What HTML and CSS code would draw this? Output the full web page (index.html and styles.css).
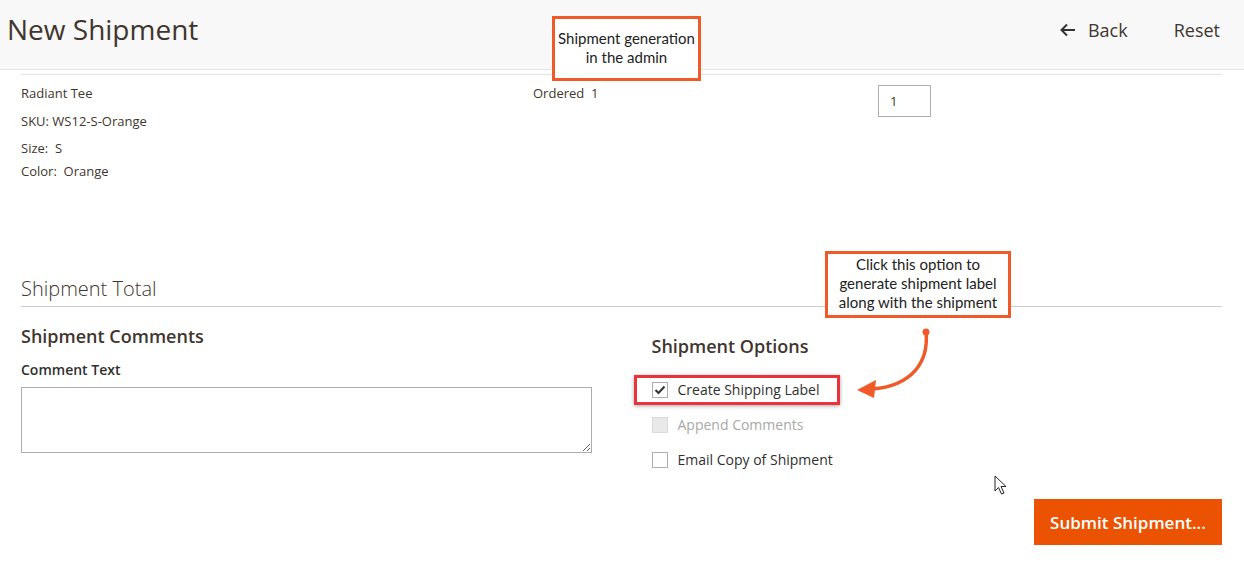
FILE: index.html
```html
<!DOCTYPE html>
<html lang="en">
<head>
  <meta charset="UTF-8" />
  <title>New Shipment</title>
  <link rel="stylesheet" href="styles.css">
</head>
<body>

  <div class="page-header">
    <h1 class="page-title">New Shipment</h1>
    <div class="page-actions">
      <span class="action-back">
        <svg class="back-icon" width="16" height="14" viewBox="0 0 16 14">
          <path d="M15 7H2M7 1.5L1.5 7L7 12.5" fill="none" stroke="#333" stroke-width="2"/>
        </svg>
        Back
      </span>
      <span class="action-reset">Reset</span>
    </div>
  </div>

  <div class="content">
    <div class="items">
      <div class="item-product">
        <div class="product-name">Radiant Tee</div>
        <div class="product-sku">SKU: WS12-S-Orange</div>
        <div class="product-opt size">Size:&nbsp; S</div>
        <div class="product-opt color">Color:&nbsp; Orange</div>
      </div>
      <div class="item-ordered">Ordered&nbsp; 1</div>
      <div class="item-qty">
        <div class="qty-input">1</div>
      </div>
    </div>

    <h2 class="total-title">Shipment Total</h2>

    <div class="columns">
      <div class="col-comments">
        <h3 class="section-title">Shipment Comments</h3>
        <div class="field-label">Comment Text</div>
        <textarea class="comment-box"></textarea>
      </div>
      <div class="col-options">
        <h3 class="section-title options-title">Shipment Options</h3>
        <div class="option option-first">
          <span class="check checked">
            <svg width="12" height="10" viewBox="0 0 12 10"><path d="M1.5 5L4.5 8L10.5 1.5" fill="none" stroke="#333" stroke-width="2"/></svg>
          </span>
          <span>Create Shipping Label</span>
          <span class="highlight"></span>
        </div>
        <div class="option disabled">
          <span class="check"></span>
          <span>Append Comments</span>
        </div>
        <div class="option">
          <span class="check"></span>
          <span>Email Copy of Shipment</span>
        </div>
      </div>
    </div>

    <div class="actions">
      <button class="submit-btn">Submit Shipment...</button>
    </div>
  </div>

  <!-- annotations drawn over the screen -->
  <div class="callout callout-top">Shipment generation<br>in the admin</div>
  <div class="callout callout-options">Click this option to<br>generate shipment label<br>along with the shipment</div>

  <svg class="arrow" width="90" height="80" viewBox="850 325 90 80">
    <circle cx="926" cy="332" r="3.5" fill="#f05a28"/>
    <path d="M926 332 C929 362 912 386 872 389" fill="none" stroke="#f05a28" stroke-width="3.5" stroke-linecap="round"/>
    <path d="M857 390 L876 380 L874 398 Z" fill="#f05a28"/>
  </svg>

  <svg class="cursor" width="14" height="22" viewBox="0 0 14 22">
    <path d="M1 1 L1 16 L4.5 12.5 L7.5 19 L10 18 L7 11.5 L12 11.5 Z" fill="#fff" stroke="#222" stroke-width="1"/>
  </svg>

</body>
</html>
```

FILE: styles.css
```css
body {
  margin: 0;
  font-family: 'Open Sans', 'Liberation Sans', sans-serif;
  color: #303030;
  background: #fff;
  position: relative;
  width: 1244px;
  height: 568px;
  overflow: hidden;
}

h1, h2, h3 {
  margin: 0;
  font-weight: normal;
}

.page-header {
  height: 69px;
  background: #f8f8f8;
  border-bottom: 1px solid #e3e3e3;
  display: flex;
  align-items: center;
  justify-content: space-between;
  padding: 0 24px 0 7px;
}

.page-title {
  font-size: 28px;
  color: #41362f;
  line-height: 36px;
  margin-top: -12px;
}

.page-actions {
  display: flex;
  align-items: center;
  gap: 46px;
  font-size: 18px;
  color: #41362f;
  margin-top: -10px;
}

.action-back {
  display: flex;
  align-items: center;
  gap: 12px;
}

.content {
  padding: 0 22px 0 21px;
}

.items {
  margin-top: 4px;
  border-top: 1px solid #e3e3e3;
  padding-top: 9px;
  display: grid;
  grid-template-columns: 512px 345px 1fr;
  font-size: 13px;
  line-height: 18px;
  color: #41362f;
}

.product-sku {
  margin-top: 10px;
}

.size {
  margin-top: 9px;
}

.color {
  margin-top: 5px;
}

.qty-input {
  margin-top: 1px;
  width: 51px;
  height: 30px;
  border: 1px solid #adadad;
  line-height: 30px;
  text-indent: 11px;
}

.total-title {
  margin-top: 95px;
  font-size: 20px;
  font-weight: 300;
  line-height: 28px;
  color: #41362f;
  padding-bottom: 3px;
  border-bottom: 1px solid #cccccc;
}

.columns {
  display: grid;
  grid-template-columns: 1fr 1fr;
}

.col-comments {
  padding-right: 30px;
}

.col-options {
  padding-left: 30px;
}

.section-title {
  margin-top: 17px;
  font-size: 18px;
  font-weight: 600;
  line-height: 24px;
  color: #41362f;
}

.options-title {
  margin-top: 27px;
  margin-bottom: 22px;
}

.field-label {
  margin-top: 12px;
  font-size: 14px;
  font-weight: 600;
  line-height: 20px;
  color: #303030;
}

.comment-box {
  display: block;
  margin-top: 7px;
  width: 100%;
  height: 66px;
  box-sizing: border-box;
  border: 1px solid #adadad;
  border-radius: 0;
  resize: vertical;
  font-family: inherit;
}

.option {
  display: flex;
  align-items: center;
  gap: 10px;
  font-size: 14px;
  line-height: 20px;
  color: #303030;
  margin-bottom: 15px;
}

.option-first {
  position: relative;
}

.option.disabled {
  color: #a8a8a8;
}

.check {
  width: 14px;
  height: 14px;
  border: 1px solid #adadad;
  background: #fff;
  display: flex;
  align-items: center;
  justify-content: center;
}

.disabled .check {
  background: #e9e9e9;
  border-color: #dadada;
}

.highlight {
  position: absolute;
  left: -18px;
  top: -5px;
  width: 200px;
  height: 24px;
  border: 3px solid #e8333b;
  box-shadow: 0 1px 4px rgba(0, 0, 0, 0.35);
}

.actions {
  display: flex;
  justify-content: flex-end;
  margin-top: 14px;
}

.submit-btn {
  width: 188px;
  height: 46px;
  border: none;
  background: #eb5202;
  color: #fff;
  font-family: 'Open Sans', sans-serif;
  font-size: 17px;
  font-weight: 600;
  padding: 0;
}

.callout {
  position: absolute;
  box-sizing: border-box;
  background: #fff;
  border: 3px solid #f05a28;
  font-family: 'Lato', 'Open Sans', sans-serif;
  font-size: 15px;
  line-height: 19px;
  color: #222;
  text-align: center;
}

.callout-top {
  left: 552px;
  top: 16px;
  width: 149px;
  height: 65px;
  padding-top: 10px;
}

.callout-options {
  left: 825px;
  top: 251px;
  width: 186px;
  height: 67px;
  padding-top: 1px;
}

.arrow {
  position: absolute;
  left: 850px;
  top: 325px;
}

.cursor {
  position: absolute;
  left: 994px;
  top: 475px;
}
```
